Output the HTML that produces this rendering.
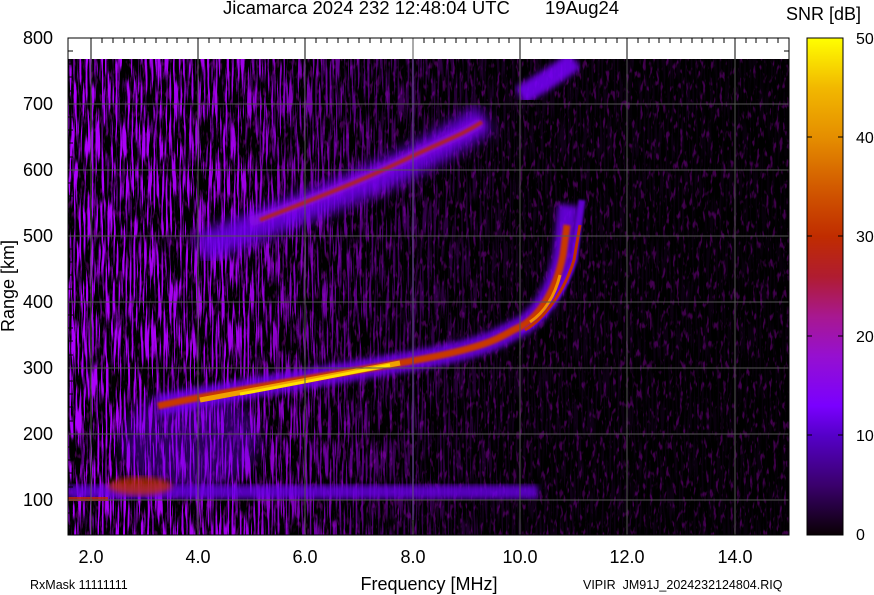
<!DOCTYPE html>
<html><head><meta charset="utf-8"><style>
html,body{margin:0;padding:0;background:#fff;width:874px;height:595px;overflow:hidden}
svg{display:block}
text{font-family:"Liberation Sans",sans-serif;fill:#000}
</style></head><body>
<svg width="874" height="595" viewBox="0 0 874 595" xmlns="http://www.w3.org/2000/svg">
<defs>
<filter id="nz" x="0" y="0" width="100%" height="100%">
<feTurbulence type="fractalNoise" baseFrequency="0.5 0.025" numOctaves="2" seed="3"/>
<feColorMatrix type="matrix" values="0 0 0 0 0.43  0 0 0 0 0  0 0 0 0 1  8 0 0 0 -3.9"/>
</filter>
<filter id="nz2" x="0" y="0" width="100%" height="100%">
<feTurbulence type="fractalNoise" baseFrequency="0.3 0.1" numOctaves="2" seed="9"/>
<feColorMatrix type="matrix" values="0 0 0 0 0.2  0 0 0 0 0  0 0 0 0 0.28  6 0 0 0 -3.4"/>
</filter>
<filter id="b3"><feGaussianBlur stdDeviation="3"/></filter>
<filter id="b6"><feGaussianBlur stdDeviation="6"/></filter>
<filter id="b1"><feGaussianBlur stdDeviation="1"/></filter>
<linearGradient id="fade" x1="0" y1="0" x2="1" y2="0">
<stop offset="0" stop-color="#fff" stop-opacity="1"/>
<stop offset="0.24" stop-color="#fff" stop-opacity="0.9"/>
<stop offset="0.45" stop-color="#fff" stop-opacity="0.35"/>
<stop offset="0.62" stop-color="#fff" stop-opacity="0.1"/>
<stop offset="1" stop-color="#fff" stop-opacity="0.04"/>
</linearGradient>
<mask id="m1"><rect x="68" y="59" width="721" height="476" fill="url(#fade)"/></mask>
<linearGradient id="cb" x1="0" y1="1" x2="0" y2="0">
<stop offset="0" stop-color="#0a0004"/>
<stop offset="0.1" stop-color="#3a006c"/>
<stop offset="0.2" stop-color="#5500c8"/>
<stop offset="0.26" stop-color="#7a00ff"/>
<stop offset="0.36" stop-color="#9610d0"/>
<stop offset="0.44" stop-color="#a81890"/>
<stop offset="0.52" stop-color="#b01c30"/>
<stop offset="0.6" stop-color="#c02c00"/>
<stop offset="0.7" stop-color="#d25a00"/>
<stop offset="0.8" stop-color="#e58e00"/>
<stop offset="0.9" stop-color="#f2b800"/>
<stop offset="1" stop-color="#ffff00"/>
</linearGradient>
<clipPath id="pc"><rect x="68" y="59" width="721" height="476"/></clipPath>
</defs>

<rect x="68" y="38" width="721" height="497" fill="#fff" stroke="#000"/>
<rect x="68" y="59" width="721" height="476" fill="#000"/>
<g clip-path="url(#pc)">
<rect x="68" y="59" width="721" height="476" filter="url(#nz2)" opacity="0.5"/>
<rect x="68" y="59" width="721" height="476" filter="url(#nz)" mask="url(#m1)"/>
<ellipse cx="190" cy="440" rx="70" ry="50" fill="#6a00e0" opacity="0.4" filter="url(#b6)"/>
<rect x="68" y="485" width="470" height="14" fill="#6a00e8" opacity="0.8" filter="url(#b3)"/>
<ellipse cx="140" cy="486" rx="32" ry="9" fill="#c03000" opacity="0.75" filter="url(#b3)"/>
<rect x="68" y="497" width="40" height="4" fill="#c02800" opacity="0.8"/>
<path d="M200,248 C240,232 300,210 360,185 S450,140 485,118" stroke="#7000f0" stroke-width="30" fill="none" opacity="0.85" filter="url(#b6)"/>
<path d="M250,222 C300,204 350,186 400,162 S460,136 482,122" stroke="#8a10e0" stroke-width="10" fill="none" opacity="0.9" filter="url(#b3)"/>
<path d="M260,220 C300,204 350,186 400,162 S460,136 482,122" stroke="#b82800" stroke-width="4" fill="none" opacity="0.8" filter="url(#b1)"/>
<path d="M520,96 C540,84 560,72 575,60" stroke="#7a00ff" stroke-width="20" fill="none" opacity="0.85" filter="url(#b3)"/>
<path d="M158,406 C200,396 300,380 400,363 S500,335 520,327 C540,316 556,290 563,255 L568,205" stroke="#7000f0" stroke-width="20" fill="none" opacity="0.85" filter="url(#b3)"/>
<path d="M520,330 C545,318 565,290 574,260 L582,200" stroke="#7000f0" stroke-width="7" fill="none" opacity="0.85" filter="url(#b1)"/>
<path d="M525,330 C545,318 565,290 574,260 L580,225" stroke="#c03000" stroke-width="3" fill="none"/>
<path d="M158,406 C200,396 300,380 400,363 S500,335 520,327 C540,316 556,290 563,255 L567,225" stroke="#c83800" stroke-width="7" fill="none" filter="url(#b1)"/>
<path d="M200,400 C250,391 300,381 400,363" stroke="#f0a000" stroke-width="5" fill="none"/>
<path d="M240,394 C280,387 330,377 390,365" stroke="#ffe000" stroke-width="3" fill="none"/>
<path d="M530,322 C545,312 555,295 560,275" stroke="#f09000" stroke-width="3" fill="none"/>
<path d="M413,59 L413,520" stroke="#7000ff" stroke-width="1.5" opacity="0.8"/>
</g>
<g stroke="#555" stroke-width="1">
<path d="M91,38V535M198,38V535M305,38V535M413,38V535M520,38V535M627,38V535M735,38V535"/>
<path d="M68,104H789M68,170H789M68,236H789M68,302H789M68,368H789M68,434H789M68,500H789"/>
</g>
<g stroke="#000" stroke-width="1">
<path d="M91,38V59M198,38V59M305,38V59M520,38V59M627,38V59M735,38V59"/>
<path d="M102,38v5M113,38v5M124,38v5M134,38v5M145,38v5M156,38v5M167,38v5M177,38v5M188,38v5M209,38v5M220,38v5M231,38v5M241,38v5M252,38v5M263,38v5M274,38v5M284,38v5M295,38v5M316,38v5M327,38v5M338,38v5M348,38v5M359,38v5M370,38v5M381,38v5M391,38v5M402,38v5M424,38v5M434,38v5M445,38v5M456,38v5M466,38v5M477,38v5M488,38v5M499,38v5M509,38v5M531,38v5M541,38v5M552,38v5M563,38v5M574,38v5M584,38v5M595,38v5M606,38v5M617,38v5M638,38v5M649,38v5M659,38v5M670,38v5M681,38v5M692,38v5M702,38v5M713,38v5M724,38v5M746,38v5M756,38v5M767,38v5M778,38v5"/>
<path d="M68,51h5M68,64h5M68,77h5M68,91h5M68,117h5M68,130h5M68,143h5M68,157h5M68,183h5M68,196h5M68,209h5M68,223h5M68,249h5M68,262h5M68,275h5M68,289h5M68,315h5M68,328h5M68,341h5M68,355h5M68,381h5M68,394h5M68,407h5M68,421h5M68,447h5M68,460h5M68,473h5M68,487h5M68,513h5M68,526h5"/>
<path d="M789,51h-5M789,64h-5M789,77h-5M789,91h-5M789,117h-5M789,130h-5M789,143h-5M789,157h-5M789,183h-5M789,196h-5M789,209h-5M789,223h-5M789,249h-5M789,262h-5M789,275h-5M789,289h-5M789,315h-5M789,328h-5M789,341h-5M789,355h-5M789,381h-5M789,394h-5M789,407h-5M789,421h-5M789,447h-5M789,460h-5M789,473h-5M789,487h-5M789,513h-5M789,526h-5"/>
</g>
<rect x="68" y="38" width="721" height="497" fill="none" stroke="#000"/>

<rect x="807" y="38" width="36" height="497" fill="url(#cb)" stroke="#000"/>
<g stroke="#000"><path d="M807,137h5M807,236h5M807,336h5M807,435h5M843,137h-5M843,236h-5M843,336h-5M843,435h-5"/></g>
<g font-size="16">
<text x="856" y="44">50</text><text x="856" y="143">40</text><text x="856" y="242">30</text><text x="856" y="342">20</text><text x="856" y="441">10</text><text x="856" y="540">0</text>
</g>
<text x="786" y="20" font-size="18">SNR [dB]</text>

<text x="223" y="14" font-size="18.5">Jicamarca 2024 232 12:48:04 UTC</text>
<text x="545" y="14" font-size="18.5">19Aug24</text>
<g font-size="18" text-anchor="end">
<text x="53" y="44">800</text><text x="53" y="110">700</text><text x="53" y="176">600</text><text x="53" y="242">500</text><text x="53" y="308">400</text><text x="53" y="374">300</text><text x="53" y="440">200</text><text x="53" y="506">100</text>
</g>
<text transform="translate(14,286) rotate(-90)" font-size="18" text-anchor="middle">Range [km]</text>
<g font-size="18" text-anchor="middle">
<text x="91" y="563">2.0</text><text x="198" y="563">4.0</text><text x="305" y="563">6.0</text><text x="413" y="563">8.0</text><text x="520" y="563">10.0</text><text x="627" y="563">12.0</text><text x="735" y="563">14.0</text>
</g>
<text x="429" y="590" font-size="18" text-anchor="middle">Frequency [MHz]</text>
<text x="30" y="589" font-size="12.5">RxMask 11111111</text>
<text x="583" y="589" font-size="12.5" xml:space="preserve">VIPIR  JM91J_2024232124804.RIQ</text>
</svg>
</body></html>
